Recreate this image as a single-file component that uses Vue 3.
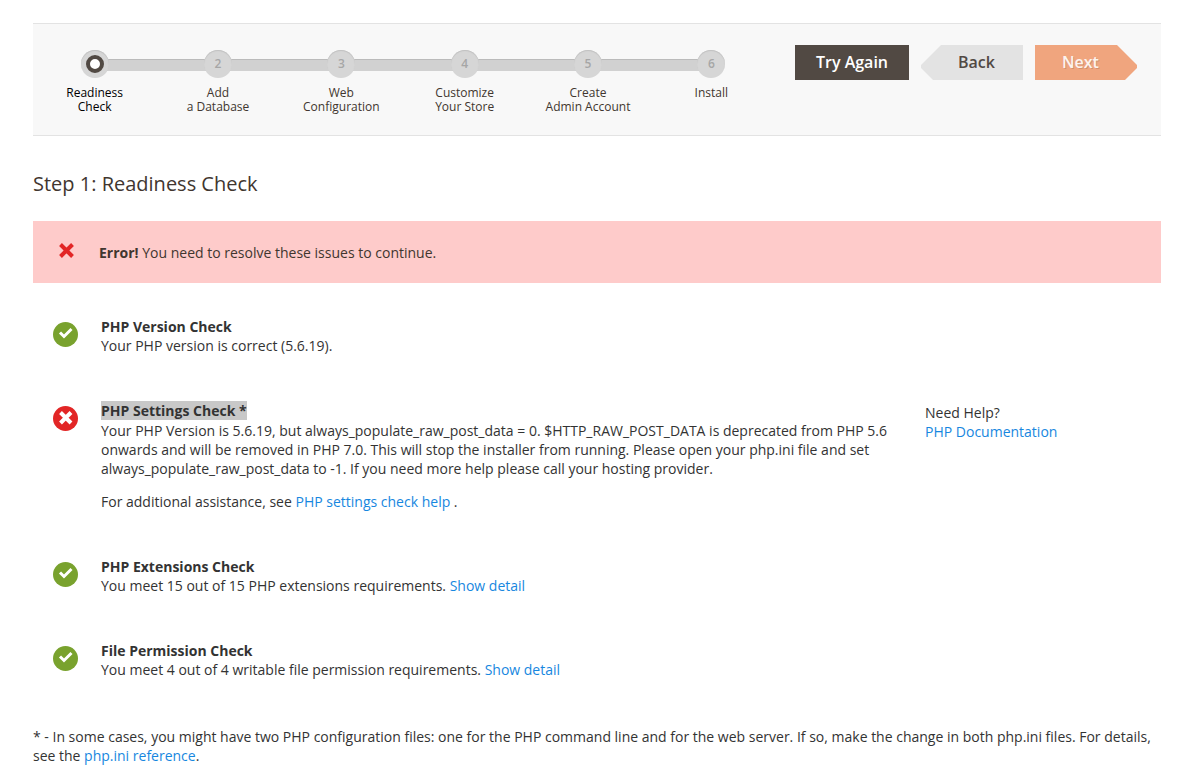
<script setup>
const steps = [
  ['Readiness', 'Check'],
  ['Add', 'a Database'],
  ['Web', 'Configuration'],
  ['Customize', 'Your Store'],
  ['Create', 'Admin Account'],
  ['Install'],
]
</script>

<template>
  <main class="page">
    <header class="bar">
      <ol class="steps">
        <li v-for="(lines, i) in steps" :key="i" class="step" :class="{ current: i === 0 }">
          <span class="dot"><template v-if="i > 0">{{ i + 1 }}</template><span v-else class="ring"></span></span>
          <a href="#" class="label"><span v-for="line in lines" :key="line">{{ line }}</span></a>
        </li>
      </ol>
      <div class="actions">
        <button type="button" class="btn retry">Try Again</button>
        <button type="button" class="btn back">Back</button>
        <button type="button" class="btn next">Next</button>
      </div>
    </header>

    <h1 class="title">Step 1: Readiness Check</h1>

    <div class="error" role="alert">
      <svg class="cross" viewBox="0 0 15 15" aria-hidden="true"><path d="M1.500 1.500L13.500 13.500M13.500 1.500L1.500 13.500" /></svg>
      <p><strong>Error!</strong> You need to resolve these issues to continue.</p>
    </div>

    <div class="checks">
      <section class="check">
        <svg class="icon ok" viewBox="0 0 25 25" aria-hidden="true"><circle cx="12.5" cy="12.5" r="12.5" /><path d="M7 10.5L11 14.5L18.500 7" /></svg>
        <div class="body">
          <h2>PHP Version Check</h2>
          <p>Your PHP version is correct (5.6.19).</p>
        </div>
      </section>

      <section class="check">
        <svg class="icon bad" viewBox="0 0 25 25" aria-hidden="true"><circle cx="12.5" cy="12.5" r="12.5" /><path d="M7.500 6.500L18 17M18 6.500L7.500 17" /></svg>
        <div class="body detailed">
          <h2><mark>PHP Settings Check *</mark></h2>
          <p>Your PHP Version is 5.6.19, but always_populate_raw_post_data = 0. $HTTP_RAW_POST_DATA is deprecated from PHP 5.6 onwards and will be removed in PHP 7.0. This will stop the installer from running. Please open your php.ini file and set always_populate_raw_post_data to -1. If you need more help please call your hosting provider.</p>
          <p>For additional assistance, see <a href="#">PHP settings check help</a> .</p>
        </div>
        <aside class="help">
          <p>Need Help?</p>
          <p><a href="#">PHP Documentation</a></p>
        </aside>
      </section>

      <section class="check">
        <svg class="icon ok" viewBox="0 0 25 25" aria-hidden="true"><circle cx="12.5" cy="12.5" r="12.5" /><path d="M7 10.5L11 14.5L18.500 7" /></svg>
        <div class="body">
          <h2>PHP Extensions Check</h2>
          <p>You meet 15 out of 15 PHP extensions requirements. <a href="#">Show detail</a></p>
        </div>
      </section>

      <section class="check">
        <svg class="icon ok" viewBox="0 0 25 25" aria-hidden="true"><circle cx="12.5" cy="12.5" r="12.5" /><path d="M7 10.5L11 14.5L18.500 7" /></svg>
        <div class="body">
          <h2>File Permission Check</h2>
          <p>You meet 4 out of 4 writable file permission requirements. <a href="#">Show detail</a></p>
        </div>
      </section>
    </div>

    <p class="note">* - In some cases, you might have two PHP configuration files: one for the PHP command line and for the web server. If so, make the change in both php.ini files. For details, see the <a href="#">php.ini reference</a>.</p>
  </main>
</template>

<style>
body {
  background: #fff;
}
</style>

<style scoped>
.page {
  padding: 23px 38px 0 33px;
  font: 14px/19px "Open Sans", "Noto Sans", sans-serif;
  color: #333;
}
h1, h2, p, ol {
  margin: 0;
  padding: 0;
}
a {
  color: #1787e0;
  text-decoration: none;
}
.bar {
  display: flex;
  align-items: flex-start;
  gap: 22px;
  padding: 21px 24px 21px 0;
  background: #f8f8f8;
  border-top: 1px solid #e3e3e3;
  border-bottom: 1px solid #e3e3e3;
}
.steps {
  flex: 1;
  display: grid;
  grid-template-columns: repeat(6, 1fr);
  padding-top: 5px;
  list-style: none;
}
.step {
  position: relative;
  display: flex;
  flex-direction: column;
  align-items: center;
  gap: 8px;
}
.step:not(:last-child)::before {
  content: "";
  position: absolute;
  top: 9px;
  left: 50%;
  width: 100%;
  height: 12px;
  box-sizing: border-box;
  border-top: 1px solid #bbb;
  background: #d1d1d1;
}
.dot {
  position: relative;
  z-index: 1;
  display: flex;
  align-items: center;
  justify-content: center;
  width: 28px;
  height: 28px;
  box-sizing: border-box;
  padding-bottom: 2px;
  border-radius: 50%;
  background: #d6d6d6;
  box-shadow: inset 0 1px 1px #c0c0c0;
  font-size: 12px;
  font-weight: 600;
  color: #a6a6a6;
}
.current .dot {
  padding-bottom: 0;
}
.ring {
  width: 10px;
  height: 10px;
  border: 4px solid #514943;
  border-radius: 50%;
  background: #fff;
}
.label {
  display: flex;
  flex-direction: column;
  align-items: center;
  font-size: 12px;
  line-height: 14px;
  color: #41362f;
}
.current .label {
  color: #000;
}
.actions {
  display: flex;
  gap: 12px;
}
.btn {
  height: 35px;
  width: 102px;
  padding: 0;
  border: 0;
  font: 600 16px/35px "Open Sans", "Noto Sans", sans-serif;
}
.retry {
  width: 114px;
  background: #514943;
  color: #fff;
}
.back {
  padding-left: 9px;
  background: #e3e3e3;
  color: #514943;
  clip-path: polygon(20px 0, 100% 0, 100% 100%, 12px 100%, 0 23px, 0 20px);
}
.next {
  padding-right: 11px;
  background: #f0a57e;
  color: #fcf3ee;
  text-shadow: 1px 1px 0 rgba(0, 0, 0, 0.15);
  clip-path: polygon(0 0, 82px 0, 100% 20px, 100% 23px, 90px 100%, 0 100%);
}
.title {
  margin: 34px 0 23px;
  font-size: 20px;
  line-height: 28px;
  font-weight: 400;
  color: #41362f;
}
.error {
  display: flex;
  align-items: flex-start;
  gap: 25px;
  padding: 22px 26px 21px;
  background: #fecbca;
}
.error p {
  color: #41362f;
}
.cross {
  width: 15px;
  height: 15px;
}
.cross path {
  stroke: #e22626;
  stroke-width: 4;
}
.checks {
  display: grid;
  gap: 46px;
  padding: 34px 0 48px 20px;
}
.check {
  display: grid;
  grid-template-columns: 25px minmax(0, 1fr) 236px;
  column-gap: 23px;
  align-items: start;
}
.icon {
  width: 25px;
  height: 25px;
  margin-top: 5px;
}
.ok circle {
  fill: #79a22e;
}
.bad circle {
  fill: #e22626;
}
.icon path {
  fill: none;
  stroke: #fff;
  stroke-width: 3;
}
.bad path {
  stroke-width: 4;
}
h2 {
  font-size: 14px;
  line-height: 19px;
  font-weight: 700;
}
mark {
  background: #c8c8c8;
  color: inherit;
}
.detailed h2 {
  margin-bottom: 1px;
}
.detailed p + p {
  margin-top: 14px;
}
.help {
  padding-top: 2px;
}
</style>
